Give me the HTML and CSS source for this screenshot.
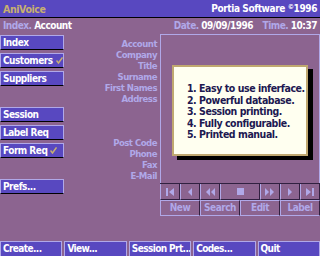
FILE: index.html
```html
<!DOCTYPE html>
<html>
<head>
<meta charset="utf-8">
<link rel="stylesheet" href="styles.css">
</head>
<body>
<div class="screen">
  <header class="topbar">
    <span class="app">AniVoice</span>
    <span class="vendor">Portia Software <sup>©</sup>1996</span>
  </header>
  <div class="infobar">
    <span><span class="key">Index.</span> Account</span>
    <span><span class="key">Date.</span> 09/09/1996 <span class="key sp">Time.</span> 10:37</span>
  </div>
  <div class="main">
    <nav class="side">
      <div class="btn">Index</div>
      <div class="btn">Customers <svg class="tick" width="7" height="7" viewBox="0 0 7 7"><path d="M0.5 3.5 L2.5 6 L6.5 0.5" fill="none" stroke="#c8b070" stroke-width="1.5"/></svg></div>
      <div class="btn">Suppliers</div>
      <div class="gap"></div>
      <div class="btn">Session</div>
      <div class="btn">Label Req</div>
      <div class="btn">Form Req <svg class="tick" width="7" height="7" viewBox="0 0 7 7"><path d="M0.5 3.5 L2.5 6 L6.5 0.5" fill="none" stroke="#c8b070" stroke-width="1.5"/></svg></div>
      <div class="gap"></div>
      <div class="btn">Prefs...</div>
    </nav>
    <div class="labels">
      <div>Account</div>
      <div>Company</div>
      <div>Title</div>
      <div>Surname</div>
      <div>First Names</div>
      <div>Address</div>
      <div></div>
      <div></div>
      <div></div>
      <div>Post Code</div>
      <div>Phone</div>
      <div>Fax</div>
      <div>E-Mail</div>
    </div>
    <div class="panel">
      <div class="box">
        <div class="popup">
          <div>1. Easy to use inferface.</div>
          <div>2. Powerful database.</div>
          <div>3. Session printing.</div>
          <div>4. Fully configurable.</div>
          <div>5. Printed manual.</div>
        </div>
      </div>
      <div class="navrow">
        <div class="nb"><svg width="9" height="8" viewBox="0 0 9 8"><rect x="0" y="0" width="2" height="8" fill="#b0a8e8"/><path d="M8 0 L3 4 L8 8Z" fill="#b0a8e8"/></svg></div>
        <div class="nb"><svg width="6" height="8" viewBox="0 0 6 8"><path d="M5 0 L1 4 L5 8Z" fill="#b0a8e8"/></svg></div>
        <div class="nb"><svg width="10" height="8" viewBox="0 0 10 8"><path d="M5 0 L1 4 L5 8Z M10 0 L6 4 L10 8Z" fill="#b0a8e8"/></svg></div>
        <div class="nb wide"><svg width="7" height="7" viewBox="0 0 7 7"><rect width="7" height="7" fill="#b0a8e8"/></svg></div>
        <div class="nb"><svg width="10" height="8" viewBox="0 0 10 8"><path d="M0 0 L4 4 L0 8Z M5 0 L9 4 L5 8Z" fill="#b0a8e8"/></svg></div>
        <div class="nb"><svg width="6" height="8" viewBox="0 0 6 8"><path d="M1 0 L5 4 L1 8Z" fill="#b0a8e8"/></svg></div>
        <div class="nb"><svg width="9" height="8" viewBox="0 0 9 8"><path d="M0 0 L5 4 L0 8Z" fill="#b0a8e8"/><rect x="6" y="0" width="2" height="8" fill="#b0a8e8"/></svg></div>
      </div>
      <div class="actrow">
        <div class="ab">New</div>
        <div class="ab">Search</div>
        <div class="ab">Edit</div>
        <div class="ab">Label</div>
      </div>
    </div>
  </div>
  <footer class="bottombar">
    <div class="fb">Create...</div>
    <div class="fb">View...</div>
    <div class="fb">Session Prt...</div>
    <div class="fb">Codes...</div>
    <div class="fb">Quit</div>
  </footer>
</div>
</body>
</html>
```

FILE: styles.css
```css
* { box-sizing: border-box; }
html, body { margin: 0; padding: 0; }
body {
  width: 320px;
  height: 256px;
  overflow: hidden;
  background: #8c6490;
  font-family: "DejaVu Sans Condensed", "Liberation Sans", sans-serif;
  font-weight: bold;
  font-size: 11px;
  color: #ffffff;
}
.screen {
  width: 320px;
  height: 256px;
  display: flex;
  flex-direction: column;
}
.topbar {
  height: 18px;
  background: #5848c0;
  border-bottom: 1px solid #000;
  display: flex;
  justify-content: space-between;
  align-items: center;
  padding: 0 3px 0 3px;
  font-size: 10.5px;
  letter-spacing: -0.4px;
}
.app { color: #c8b070; }
.vendor { color: #fff; font-size: 10px; }
.vendor sup { font-size: 7px; vertical-align: 3px; }
.infobar {
  height: 16px;
  display: flex;
  justify-content: space-between;
  align-items: center;
  padding: 0 3px 0 3px;
  font-size: 10px;
  letter-spacing: -0.5px;
  line-height: 16px;
}
.key { color: #b0a8e8; }
.key.sp { margin-left: 7px; }
.main {
  height: 207px;
  display: flex;
}
.side {
  width: 64px;
  padding-top: 1px;
  display: flex;
  flex-direction: column;
}
.btn {
  height: 15px;
  margin-bottom: 3px;
  background: #5848c0;
  border-top: 1px solid #b0a8e8;
  border-left: 1px solid #b0a8e8;
  border-right: 1px solid #b0a8e8;
  border-bottom: 1px solid #000;
  padding-left: 2px;
  font-size: 10px;
  letter-spacing: -0.5px;
  line-height: 13px;
  display: flex;
  align-items: center;
  gap: 3px;
  white-space: nowrap;
}
.gap { height: 18px; }
.labels {
  width: 96px;
  padding-top: 4px;
  padding-right: 3px;
  text-align: right;
  color: #b0a8e8;
  font-size: 9.5px;
  letter-spacing: -0.5px;
  line-height: 11px;
}
.labels div { height: 11px; }
.panel {
  width: 160px;
  display: flex;
  flex-direction: column;
}
.box {
  height: 149px;
  border: 1px solid #b0a8e8;
  border-bottom: none;
  position: relative;
}
.popup {
  position: absolute;
  left: 11px;
  top: 30px;
  width: 136px;
  height: 91px;
  background: #fffff0;
  border: 2px solid #c0a870;
  box-shadow: 5px 4px 0 #000;
  padding: 16px 0 0 13px;
  color: #201850;
  font-size: 10.5px;
  letter-spacing: -0.45px;
  line-height: 11.5px;
  white-space: nowrap;
}
.navrow {
  height: 17px;
  display: flex;
  border-top: 1px solid #302040;
}
.nb {
  width: 20px;
  height: 16px;
  border-left: 1px solid #b0a8e8;
  border-right: 1px solid #302040;
  border-bottom: 1px solid #302040;
  display: flex;
  align-items: center;
  justify-content: center;
}
.nb.wide { width: 40px; }
.actrow {
  height: 16px;
  display: flex;
}
.ab {
  width: 40px;
  height: 16px;
  border-top: 1px solid #b0a8e8;
  border-left: 1px solid #b0a8e8;
  border-right: 1px solid #302040;
  border-bottom: 1px solid #b0a8e8;
  color: #b0a8e8;
  font-size: 10px;
  letter-spacing: -0.5px;
  line-height: 14px;
  text-align: center;
}
.bottombar {
  height: 15px;
  display: flex;
  gap: 2px;
}
.fb {
  width: 62.4px;
  height: 15px;
  background: #5848c0;
  border-top: 1px solid #b0a8e8;
  border-left: 1px solid #b0a8e8;
  border-right: 1px solid #b0a8e8;
  padding-left: 2px;
  font-size: 10px;
  letter-spacing: -0.6px;
  line-height: 14px;
  white-space: nowrap;
  overflow: hidden;
}
```
